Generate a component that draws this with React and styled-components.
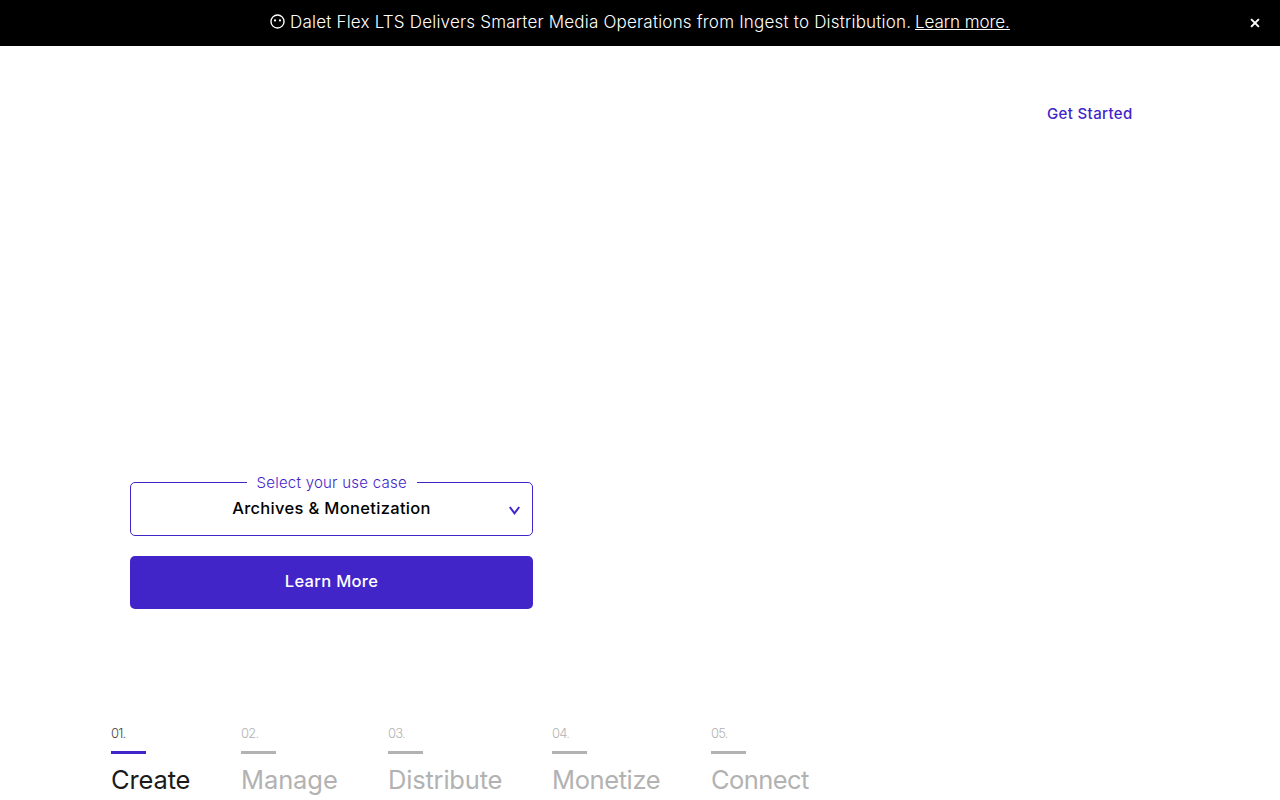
import React from "react";
import styled, { createGlobalStyle } from "styled-components";

const violet = "#4225c9";

const GlobalStyle = createGlobalStyle`
  *, *::before, *::after { box-sizing: border-box; }
  html, body { margin: 0; }
  body {
    height: 800px;
    overflow: hidden;
    background: #fff;
    font-family: Inter, "Liberation Sans", sans-serif;
  }
`;

const Page = styled.div`
  width: 1280px;
  height: 800px;
  overflow: hidden;
  display: flex;
  flex-direction: column;
`;

const Banner = styled.div`
  height: 46px;
  flex: none;
  display: grid;
  grid-template-columns: 50px 1fr 50px;
  align-items: center;
  background: #000;
  color: #fff;
`;

const Announcement = styled.p`
  grid-column: 2;
  margin: 0;
  display: flex;
  align-items: center;
  justify-content: center;
  padding-bottom: 3px;
  font-size: 17px;
  font-weight: 300;
  line-height: 24px;
  white-space: nowrap;
`;

const Face = styled.svg`
  width: 15px;
  height: 15px;
  margin: 0 5px 0 0;
`;

const Message = styled.span`
  width: 625px;
  letter-spacing: 0.2px;
`;

const BannerLink = styled.a`
  width: 95px;
  letter-spacing: -0.05px;
  color: inherit;
  text-decoration: underline;
  text-decoration-thickness: 1px;
  text-underline-offset: 1px;
  text-decoration-skip-ink: none;
`;

const Close = styled.button`
  display: flex;
  justify-content: center;
  padding: 0;
  border: 0;
  background: none;
  color: inherit;
`;

const Header = styled.header`
  height: 136px;
  flex: none;
  display: flex;
  justify-content: flex-end;
  align-items: center;
  padding: 0 147px 2px 0;
`;

const StartLink = styled.a`
  width: 86px;
  color: ${violet};
  font-size: 15px;
  font-weight: 500;
  letter-spacing: 0.36px;
  white-space: nowrap;
`;

const Form = styled.form`
  width: 403px;
  margin: 292px 0 0 130px;
  display: flex;
  flex-direction: column;
  gap: 20px;
`;

const Field = styled.fieldset`
  height: 62px;
  min-width: 0;
  margin: 0;
  padding: 0 12px;
  border: 1px solid ${violet};
  border-radius: 5px;
`;

const Legend = styled.legend`
  width: 170px;
  height: 17px;
  margin: 0 auto;
  padding: 0 10px;
  color: ${violet};
  font-size: 15px;
  font-weight: 300;
  line-height: 17px;
  letter-spacing: 0.24px;
  white-space: nowrap;
`;

const Choice = styled.div`
  display: grid;
  grid-template-columns: 11px 1fr 11px;
  align-items: center;
  height: 34px;
  font-size: 16.5px;
  font-weight: 500;
  letter-spacing: 0.32px;
  color: #000;
`;

const ChoiceText = styled.span`
  grid-column: 2;
  text-align: center;
`;

const Chevron = styled.svg`
  width: 11px;
  height: 9px;
  margin-top: 4px;
`;

const Submit = styled.button`
  height: 53px;
  padding: 0 0 4px;
  border: 0;
  border-radius: 5px;
  background: ${violet};
  color: #fff;
  font: 500 16.5px Inter, "Liberation Sans", sans-serif;
  letter-spacing: 0.32px;
`;

const Steps = styled.nav`
  display: flex;
  gap: 50px;
  margin: 116px 0 0 111px;
`;

const Step = styled.div`
  flex: none;
  width: ${(p) => p.$width}px;
  color: ${(p) => (p.$active ? "#1a1a1a" : "#b2b2b2")};
  white-space: nowrap;
`;

const StepNumber = styled.div`
  height: 26px;
  color: ${(p) => (p.$active ? "#444" : "#b2b2b2")};
  font-size: 13px;
  font-weight: 300;
  line-height: 17px;
  letter-spacing: -0.8px;
`;

const StepBar = styled.div`
  width: 35px;
  height: 3px;
  background: ${(p) => (p.$active ? violet : "#b2b2b2")};
`;

const StepName = styled.div`
  margin-top: 8px;
  font-size: 25.5px;
  font-weight: 400;
  line-height: 36px;
  letter-spacing: ${(p) => p.$spacing}px;
`;

const steps = [
  { name: "Create", width: 80, spacing: -0.15 },
  { name: "Manage", width: 97, spacing: -0.1 },
  { name: "Distribute", width: 114, spacing: -0.2 },
  { name: "Monetize", width: 109, spacing: -0.4 },
  { name: "Connect", width: 99, spacing: -0.6 },
];

export default function App() {
  return (
    <Page>
      <GlobalStyle />
      <Banner>
        <Announcement>
          <Face viewBox="0 0 14 14" aria-hidden="true">
            <circle cx="7" cy="7" r="6.1" fill="none" stroke="#fff" strokeWidth="1.3" />
            <circle cx="4.7" cy="6" r="1" fill="#fff" />
            <circle cx="9.3" cy="6" r="1" fill="#fff" />
          </Face>
          <Message>Dalet Flex LTS Delivers Smarter Media Operations from Ingest to Distribution.</Message>
          <BannerLink>Learn more.</BannerLink>
        </Announcement>
        <Close aria-label="Close" type="button">
          <svg width="10" height="10" viewBox="0 0 10 10">
            <path d="M1.1 1.1l7.8 7.8M8.9 1.1L1.1 8.9" stroke="#fff" strokeWidth="2" />
          </svg>
        </Close>
      </Banner>
      <Header>
        <StartLink>Get Started</StartLink>
      </Header>
      <Form>
        <Field>
          <Legend>Select your use case</Legend>
          <Choice>
            <ChoiceText>Archives &amp; Monetization</ChoiceText>
            <Chevron viewBox="0 0 11 9">
              <path d="M0.8 1l4.7 6.3L10.2 1" fill="none" stroke={violet} strokeWidth="2" />
            </Chevron>
          </Choice>
        </Field>
        <Submit type="button">Learn More</Submit>
      </Form>
      <Steps>
        {steps.map((s, i) => (
          <Step key={s.name} $width={s.width} $active={i === 0}>
            <StepNumber $active={i === 0}>{`0${i + 1}.`}</StepNumber>
            <StepBar $active={i === 0} />
            <StepName $spacing={s.spacing}>{s.name}</StepName>
          </Step>
        ))}
      </Steps>
    </Page>
  );
}
